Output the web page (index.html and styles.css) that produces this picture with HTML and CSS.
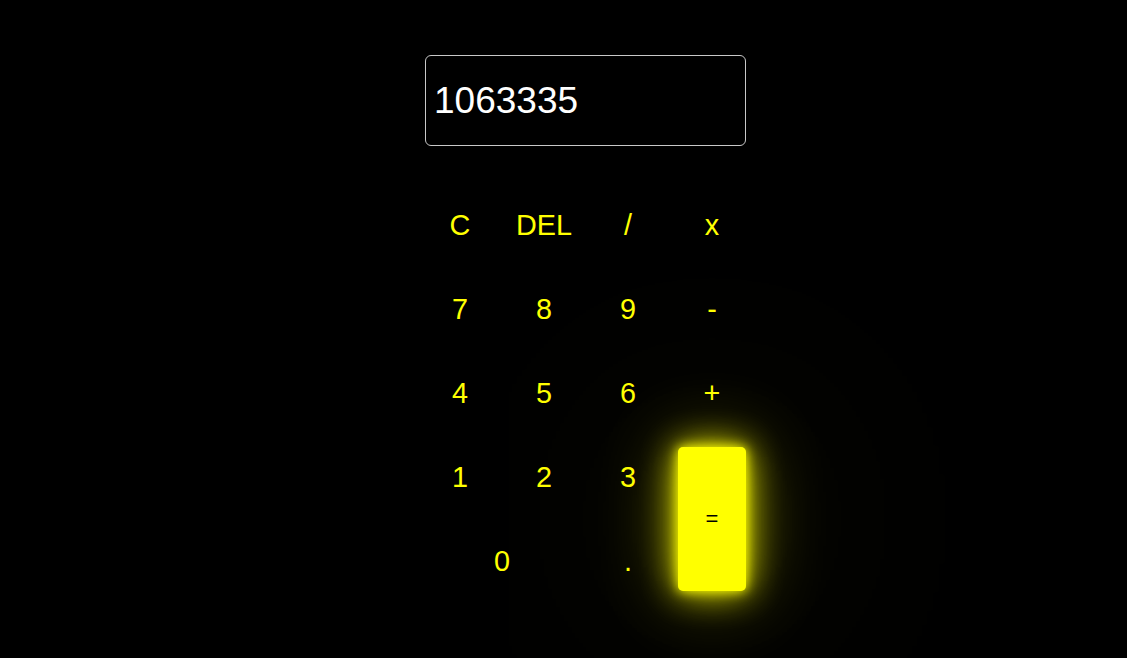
FILE: index.html
```html
<!DOCTYPE html>
<html>
<head>
<meta charset="utf-8">
<link rel="stylesheet" href="styles.css">
</head>
<body>
<div class="calc">
  <div class="display">1063335</div>
  <div class="keys">
    <button class="key">C</button>
    <button class="key">DEL</button>
    <button class="key">/</button>
    <button class="key">x</button>
    <button class="key">7</button>
    <button class="key">8</button>
    <button class="key">9</button>
    <button class="key">-</button>
    <button class="key">4</button>
    <button class="key">5</button>
    <button class="key">6</button>
    <button class="key">+</button>
    <button class="key">1</button>
    <button class="key">2</button>
    <button class="key">3</button>
    <button class="key equals">=</button>
    <button class="key zero">0</button>
    <button class="key">.</button>
  </div>
</div>
</body>
</html>
```
FILE: styles.css
```css
html, body {
  margin: 0;
  padding: 0;
  background: #000;
  height: 100%;
  overflow: hidden;
}
body {
  font-family: "Liberation Sans", Arial, sans-serif;
}
.calc {
  margin: 55px 0 0 425px;
  width: 321px;
}
.display {
  box-sizing: border-box;
  width: 321px;
  height: 91px;
  border: 1px solid #c8c8c8;
  border-radius: 6px;
  color: #fff;
  font-size: 37px;
  display: flex;
  align-items: center;
  padding-left: 8px;
}
.keys {
  margin-top: 49px;
  margin-left: 1px;
  display: grid;
  grid-template-columns: repeat(4, 68px);
  grid-auto-rows: 60px;
  column-gap: 16px;
  row-gap: 24px;
}
.key {
  background: transparent;
  border: none;
  color: #ffff00;
  font-family: "Liberation Sans", Arial, sans-serif;
  font-size: 28.8px;
  padding: 0;
  display: flex;
  align-items: center;
  justify-content: center;
}
.zero {
  grid-column: span 2;
}
.equals {
  grid-column: 4;
  grid-row: 4 / span 2;
  background: #ffff00;
  color: #000;
  font-size: 22px;
  border-radius: 5px;
  box-shadow: 0 0 12px #ffff00, 0 0 35px #ffff00, 0 0 80px rgba(255,255,0,0.45), 0 0 420px rgba(255,255,0,0.2);
}
```
